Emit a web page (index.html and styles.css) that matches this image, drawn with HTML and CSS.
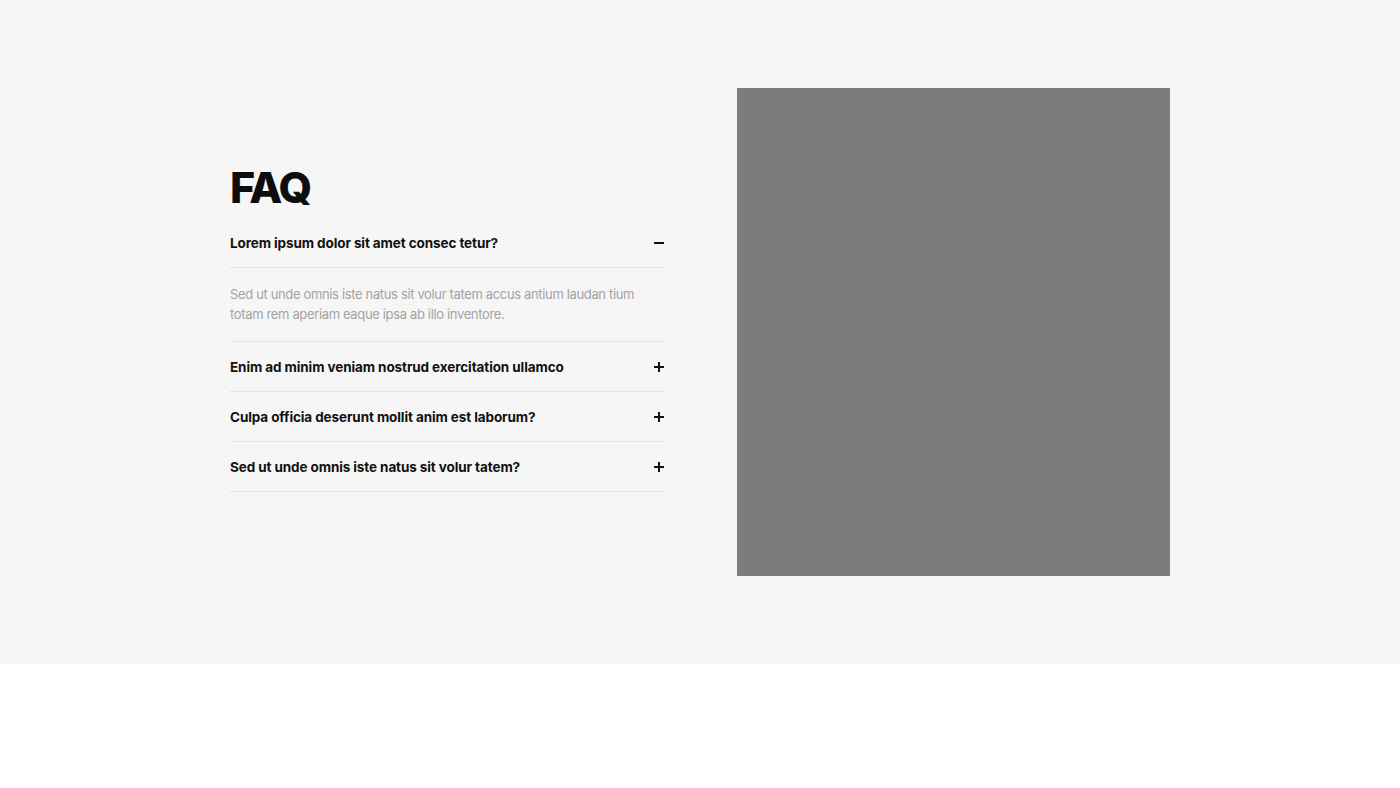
FILE: index.html
```html
<!DOCTYPE html>
<html lang="en">
<head>
    <meta charset="UTF-8">
    <title>FAQ</title>
    <meta name="viewport" content="width=device-width, initial-scale=1.0">
    <link rel="stylesheet" href="styles.css">
</head>
<body>

<section class="faq-section">
    <div class="faq-wrap">
        <div class="faq-list">
            <h2>FAQ</h2>

            <div class="faq-item open">
                <div class="question">
                    <span>Lorem ipsum dolor sit amet consec tetur?</span>
                    <i class="toggle"></i>
                </div>
                <div class="answer">
                    Sed ut unde omnis iste natus sit volur tatem accus antium laudan tium
                    totam rem aperiam eaque ipsa ab illo inventore.
                </div>
            </div>

            <div class="faq-item">
                <div class="question">
                    <span>Enim ad minim veniam nostrud exercitation ullamco</span>
                    <i class="toggle"></i>
                </div>
            </div>

            <div class="faq-item">
                <div class="question">
                    <span>Culpa officia deserunt mollit anim est laborum?</span>
                    <i class="toggle"></i>
                </div>
            </div>

            <div class="faq-item">
                <div class="question">
                    <span>Sed ut unde omnis iste natus sit volur tatem?</span>
                    <i class="toggle"></i>
                </div>
            </div>
        </div>

        <div class="faq-image"></div>
    </div>
</section>

<div class="after"></div>

</body>
</html>
```

FILE: styles.css
```css
body {
    margin: 0;
    font-family: Inter, "Noto Sans", sans-serif;
    background: #fff;
    color: #111;
}
.faq-section {
    background: #f6f6f6;
    height: 664px;
    padding-top: 88px;
    box-sizing: border-box;
}
.faq-wrap {
    width: 940px;
    margin: 0 auto;
    display: flex;
    justify-content: space-between;
    align-items: flex-start;
}
.faq-list {
    width: 434px;
    margin-top: 73px;
}
.faq-list h2 {
    font-size: 43px;
    font-weight: 800;
    letter-spacing: -2px;
    line-height: 52px;
    margin: 0 0 5px;
    color: #0d0d0d;
}
.faq-item {
    border-bottom: 1px solid #e3e3e3;
}
.question {
    display: flex;
    align-items: center;
    justify-content: space-between;
    height: 49px;
    font-size: 13.5px;
    font-weight: 700;
    letter-spacing: -0.1px;
    color: #111;
}
.faq-item.open .question {
    border-bottom: 1px solid #e3e3e3;
}
.toggle {
    position: relative;
    width: 10px;
    height: 10px;
}
.toggle::before,
.toggle::after {
    content: "";
    position: absolute;
    background: #111;
}
.toggle::before {
    left: 0;
    top: 4px;
    width: 10px;
    height: 2px;
}
.toggle::after {
    left: 4px;
    top: 0;
    width: 2px;
    height: 10px;
}
.faq-item.open .toggle::after {
    display: none;
}
.answer {
    padding: 16px 0 17px;
    font-size: 13px;
    line-height: 20px;
    color: #a3a3a3;
    letter-spacing: -0.35px;
}
.faq-image {
    width: 433px;
    height: 488px;
    background: #7b7c7d;
}
.after {
    height: 124px;
}
```
